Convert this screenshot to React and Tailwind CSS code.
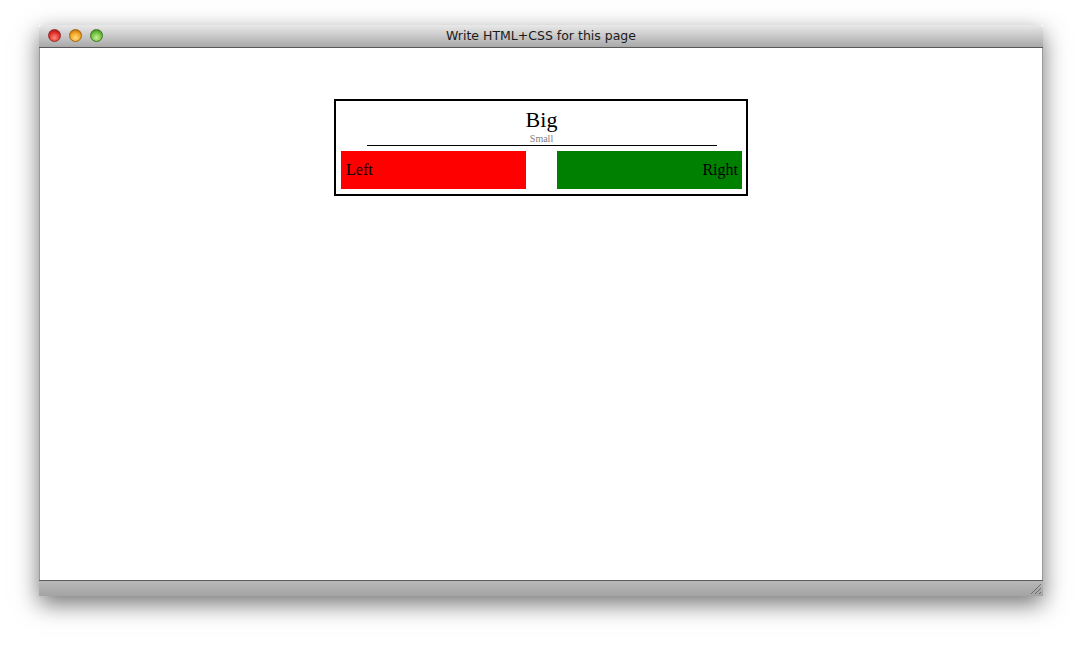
export default function App() {
  return (
    <div className="w-[1083px] h-[651px] bg-white relative overflow-hidden">
      <div className="absolute left-[39px] top-[25px] w-[1004px] h-[571px] flex flex-col shadow-[0_8px_22px_rgba(0,0,0,0.55)]">
        {/* Title bar */}
        <div className="h-[23px] relative flex items-center justify-center bg-gradient-to-b from-[#e9e9e9] to-[#a9a9a9] border-b border-[#585858] rounded-t-[4px]">
          <div className="absolute left-[9px] top-[4px] flex gap-[8px]">
            <span className="w-[13px] h-[13px] rounded-full border border-[#9a2a2a] bg-[radial-gradient(circle_at_50%_70%,#ff8a80_0%,#e0302a_55%,#8c1010_100%)]" />
            <span className="w-[13px] h-[13px] rounded-full border border-[#a0660f] bg-[radial-gradient(circle_at_50%_70%,#ffe080_0%,#f0a020_55%,#9a5a08_100%)]" />
            <span className="w-[13px] h-[13px] rounded-full border border-[#3e7a1e] bg-[radial-gradient(circle_at_50%_70%,#c8f090_0%,#6cc040_55%,#2e6e12_100%)]" />
          </div>
          <span className="text-[12.5px] text-[#1a1a1a] font-['DejaVu_Sans',sans-serif] mt-[1px]">Write HTML+CSS for this page</span>
        </div>
        {/* Content */}
        <div className="flex-1 bg-white border-x border-[#9a9a9a] pt-[51px]">
          <div className="w-[414px] mx-auto border-2 border-black pt-[6px] pb-[5px] pl-[5px] pr-[4px] font-['Liberation_Serif',serif]">
            <div className="text-center text-[22px] leading-[26px] text-black">Big</div>
            <div className="text-center text-[10px] leading-[11px] text-[#808080]">Small</div>
            <div className="w-[350px] mx-auto border-t border-black mt-[1px]" />
            <div className="flex justify-between mt-[5px]">
              <div className="w-[185px] h-[38px] bg-[#ff0000] flex items-center pl-[5px] text-[16px] text-black">Left</div>
              <div className="w-[185px] h-[38px] bg-[#008000] flex items-center justify-end pr-[4px] text-[16px] text-black">Right</div>
            </div>
          </div>
        </div>
        {/* Bottom bar */}
        <div className="h-[16px] bg-gradient-to-b from-[#b9b9b9] to-[#a3a3a3] border-t border-[#5a5a5a] relative">
          <svg className="absolute right-[2px] bottom-[2px]" width="11" height="11" viewBox="0 0 11 11">
            <line x1="1" y1="11" x2="11" y2="1" stroke="#6a6a6a" strokeWidth="1" />
            <line x1="5" y1="11" x2="11" y2="5" stroke="#6a6a6a" strokeWidth="1" />
            <line x1="9" y1="11" x2="11" y2="9" stroke="#6a6a6a" strokeWidth="1" />
          </svg>
        </div>
      </div>
    </div>
  );
}
